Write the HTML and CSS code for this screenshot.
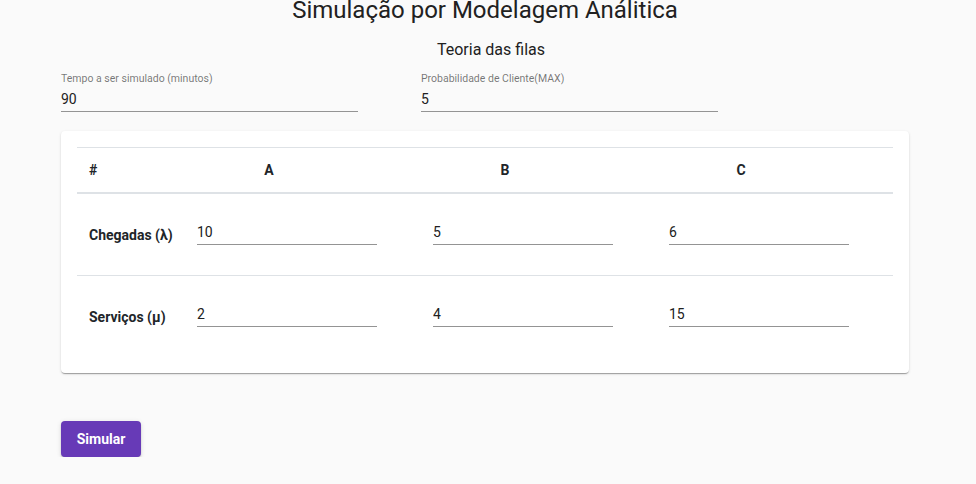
FILE: index.html
```html
<!DOCTYPE html>
<html lang="pt-BR">
<head>
<meta charset="utf-8">
<title>Simulação por Modelagem Análitica</title>
<link rel="stylesheet" href="styles.css">
</head>
<body>
<main class="page">
  <h1 class="title">Simulação por Modelagem Análitica</h1>
  <h2 class="subtitle">Teoria das filas</h2>

  <div class="fields">
    <label class="field">
      <span class="field-label">Tempo a ser simulado (minutos)</span>
      <input class="field-input" type="text" value="90">
    </label>
    <label class="field">
      <span class="field-label">Probabilidade de Cliente(MAX)</span>
      <input class="field-input" type="text" value="5">
    </label>
  </div>

  <section class="card">
    <div class="table">
      <div class="row head">
        <div class="cell-label">#</div>
        <div class="cell-head">A</div>
        <div class="cell-head">B</div>
        <div class="cell-head">C</div>
      </div>
      <div class="row body-row">
        <div class="cell-label">Chegadas (λ)</div>
        <div class="cell-input"><input class="mini-input" type="text" value="10"></div>
        <div class="cell-input"><input class="mini-input" type="text" value="5"></div>
        <div class="cell-input"><input class="mini-input" type="text" value="6"></div>
      </div>
      <div class="row body-row last">
        <div class="cell-label">Serviços (μ)</div>
        <div class="cell-input"><input class="mini-input" type="text" value="2"></div>
        <div class="cell-input"><input class="mini-input" type="text" value="4"></div>
        <div class="cell-input"><input class="mini-input" type="text" value="15"></div>
      </div>
    </div>
  </section>

  <button class="btn" type="button">Simular</button>
</main>
</body>
</html>
```

FILE: styles.css
```css
* { box-sizing: border-box; }

html, body {
  margin: 0;
  padding: 0;
  background: #fafafa;
  font-family: Roboto, "Liberation Sans", Arial, sans-serif;
  color: #212121;
}

.page {
  width: 848px;
  margin-left: 61px;
  display: flex;
  flex-direction: column;
}

.title {
  margin: 0;
  font-size: 24px;
  line-height: 20px;
  padding-top: 0;
  font-weight: 400;
  text-align: center;
  color: #212121;
}

.subtitle {
  margin: 20px 0 0;
  font-size: 16px;
  line-height: 20px;
  font-weight: 400;
  text-align: center;
  color: #212121;
  padding-left: 12px;
}

.fields {
  display: flex;
  gap: 63px;
  margin-top: 13px;
}

.field {
  width: 297px;
  display: flex;
  flex-direction: column;
}

.field-label {
  font-size: 10.5px;
  line-height: 12px;
  color: rgba(0, 0, 0, 0.54);
}

.field-input {
  margin-top: 4px;
  height: 23px;
  padding: 0 0 2px;
  border: none;
  border-bottom: 1px solid #949494;
  background: transparent;
  font-family: inherit;
  font-size: 14px;
  line-height: 20px;
  color: #212121;
  outline: none;
}

.card {
  margin-top: 19px;
  background: #fff;
  border-radius: 4px;
  padding: 16px;
  box-shadow: 0 2px 1px -1px rgba(0,0,0,.2), 0 1px 1px 0 rgba(0,0,0,.14), 0 1px 3px 0 rgba(0,0,0,.12);
}

.table {
  border-top: 1px solid #dee2e6;
}

.row {
  display: grid;
  grid-template-columns: 108px 236px 236px 236px;
}

.head {
  height: 46px;
  border-bottom: 2px solid #dee2e6;
  align-items: center;
  font-weight: 700;
  font-size: 14px;
  color: #212529;
}

.cell-label {
  padding-left: 12px;
  font-weight: 700;
  font-size: 14px;
  color: #212529;
  align-self: center;
}

.cell-head {
  padding-right: 68px;
  text-align: center;
}

.body-row {
  height: 82px;
  border-bottom: 1px solid #dee2e6;
}

.body-row.last {
  height: 81px;
  border-bottom: none;
}

.cell-input {
  padding: 27px 0 0 12px;
}

.mini-input {
  display: block;
  width: 180px;
  height: 24px;
  padding: 0 0 2px;
  border: none;
  border-bottom: 1px solid #949494;
  background: transparent;
  font-family: inherit;
  font-size: 14px;
  line-height: 20px;
  color: #212121;
  outline: none;
}

.btn {
  align-self: flex-start;
  margin-top: 48px;
  width: 80px;
  height: 36px;
  border: none;
  border-radius: 4px;
  background: #673ab7;
  color: #fff;
  font-family: inherit;
  font-size: 14px;
  font-weight: 700;
  box-shadow: 0 3px 1px -2px rgba(0,0,0,.2), 0 2px 2px 0 rgba(0,0,0,.14), 0 1px 5px 0 rgba(0,0,0,.12);
  cursor: pointer;
}
```
